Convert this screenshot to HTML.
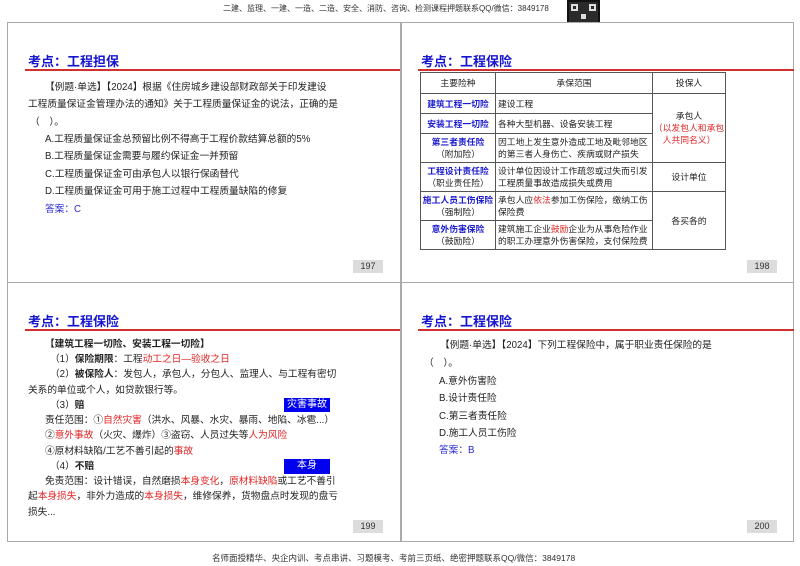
<!DOCTYPE html>
<html><head><meta charset="utf-8">
<style>
*{margin:0;padding:0;box-sizing:border-box}
body{width:800px;height:566px;background:#fff;position:relative;overflow:hidden;font-family:"Liberation Sans","Noto Sans CJK SC",sans-serif;color:#222}
.a{position:absolute;white-space:nowrap}
.panel{position:absolute;border:1px solid #aaa;background:#fff}
.title{position:absolute;font-size:13px;font-weight:bold;color:#1515d0;white-space:nowrap}
.rl{position:absolute;height:2px;background:#d03030}
.t{position:absolute;font-size:9.7px;white-space:nowrap;line-height:14px}
.pn{position:absolute;width:30px;height:13px;background:#dcdcdc;font-size:9px;text-align:center;line-height:13px;color:#333}
.r{color:#e02525}
.b{color:#2a2ad0}
.box{position:absolute;background:#0000ee;color:#fff;font-size:10px;text-align:center;line-height:14px}
table{position:absolute;border-collapse:collapse;font-size:8.8px;table-layout:fixed}
td{border:1px solid #555;text-align:center;line-height:12px;padding:0;white-space:nowrap;overflow:hidden}
td.l{text-align:left;padding-left:2px}
td .k{color:#1a1ad0;font-weight:bold}
</style></head><body>
<div class="a" style="left:223px;top:3px;font-size:8px;color:#333">二建、监理、一建、一造、二造、安全、消防、咨询、检测课程押题联系QQ/微信：3849178</div>
<div class="a" style="left:567px;top:0;width:33px;height:33px;background:#2a2a2a;border:2px solid #111">
<div style="position:absolute;left:2px;top:2px;width:7px;height:7px;border:2px solid #ddd"></div>
<div style="position:absolute;right:2px;top:2px;width:7px;height:7px;border:2px solid #ddd"></div>
<div style="position:absolute;left:2px;bottom:2px;width:7px;height:7px;border:2px solid #ddd"></div>
<div style="position:absolute;left:12px;top:12px;width:5px;height:5px;background:#ddd"></div>
</div>

<div class="panel" style="left:7px;top:22px;width:394px;height:261px"></div>
<div class="panel" style="left:401px;top:22px;width:393px;height:261px"></div>
<div class="panel" style="left:7px;top:282px;width:394px;height:260px"></div>
<div class="panel" style="left:401px;top:282px;width:393px;height:260px"></div>

<!-- 197 -->
<div class="title" style="left:28px;top:51px">考点：工程担保</div>
<div class="rl" style="left:25px;top:69px;width:375px"></div>
<div class="t" style="left:45px;top:81px">【例题·单选】【2024】根据《住房城乡建设部财政部关于印发建设</div>
<div class="t" style="left:28px;top:98px">工程质量保证金管理办法的通知》关于工程质量保证金的说法，正确的是</div>
<div class="t" style="left:30px;top:116px">（　）。</div>
<div class="t" style="left:45px;top:133px">A.工程质量保证金总预留比例不得高于工程价款结算总额的5%</div>
<div class="t" style="left:45px;top:150px">B.工程质量保证金需要与履约保证金一并预留</div>
<div class="t" style="left:45px;top:168px">C.工程质量保证金可由承包人以银行保函替代</div>
<div class="t" style="left:45px;top:185px">D.工程质量保证金可用于施工过程中工程质量缺陷的修复</div>
<div class="t b" style="left:45px;top:203px">答案：C</div>
<div class="pn" style="left:353px;top:260px">197</div>

<!-- 198 -->
<div class="title" style="left:421px;top:51px">考点：工程保险</div>
<div class="rl" style="left:418px;top:69px;width:376px"></div>
<table style="left:420px;top:72px;width:305px">
<colgroup><col style="width:75px"><col style="width:157px"><col style="width:73px"></colgroup>
<tr style="height:21px"><td>主要险种</td><td>承保范围</td><td>投保人</td></tr>
<tr style="height:20px"><td><span class="k">建筑工程一切险</span></td><td class="l">建设工程</td><td rowspan="3">承包人<br><span class="r">（以发包人和承包<br>人共同名义）</span></td></tr>
<tr style="height:20px"><td><span class="k">安装工程一切险</span></td><td class="l">各种大型机器、设备安装工程</td></tr>
<tr style="height:29px"><td><span class="k">第三者责任险</span><br>（附加险）</td><td class="l">因工地上发生意外造成工地及毗邻地区<br>的第三者人身伤亡、疾病或财产损失</td></tr>
<tr style="height:29px"><td><span class="k">工程设计责任险</span><br>（职业责任险）</td><td class="l">设计单位因设计工作疏忽或过失而引发<br>工程质量事故造成损失或费用</td><td>设计单位</td></tr>
<tr style="height:29px"><td><span class="k">施工人员工伤保险</span><br>（强制险）</td><td class="l">承包人应<span class="r">依法</span>参加工伤保险，缴纳工伤<br>保险费</td><td rowspan="2">各买各的</td></tr>
<tr style="height:29px"><td><span class="k">意外伤害保险</span><br>（鼓励险）</td><td class="l">建筑施工企业<span class="r">鼓励</span>企业为从事危险作业<br>的职工办理意外伤害保险，支付保险费</td></tr>
</table>
<div class="pn" style="left:747px;top:260px">198</div>

<!-- 199 -->
<div class="title" style="left:28px;top:311px">考点：工程保险</div>
<div class="rl" style="left:25px;top:329px;width:375px"></div>
<div class="t" style="left:45px;top:338px;font-weight:bold">【建筑工程一切险、安装工程一切险】</div>
<div class="t" style="left:50px;top:353px">（1）<b>保险期限</b>：工程<span class="r">动工之日—验收之日</span></div>
<div class="t" style="left:50px;top:368px">（2）<b>被保险人</b>：发包人，承包人，分包人、监理人、与工程有密切</div>
<div class="t" style="left:28px;top:384px">关系的单位或个人，如贷款银行等。</div>
<div class="t" style="left:50px;top:399px">（3）<b>赔</b></div>
<div class="box" style="left:284px;top:398px;width:46px;height:14px">灾害事故</div>
<div class="t" style="left:45px;top:414px">责任范围：①<span class="r">自然灾害</span>（洪水、风暴、水灾、暴雨、地陷、冰雹...）</div>
<div class="t" style="left:45px;top:429px">②<span class="r">意外事故</span>（火灾、爆炸）③盗窃、人员过失等<span class="r">人为风险</span></div>
<div class="t" style="left:45px;top:445px">④原材料缺陷/工艺不善引起的<span class="r">事故</span></div>
<div class="t" style="left:50px;top:460px">（4）<b>不赔</b></div>
<div class="box" style="left:284px;top:459px;width:46px;height:15px">本身</div>
<div class="t" style="left:45px;top:475px">免责范围：设计错误，自然磨损<span class="r">本身变化</span>，<span class="r">原材料缺陷</span>或工艺不善引</div>
<div class="t" style="left:28px;top:490px">起<span class="r">本身损失</span>，非外力造成的<span class="r">本身损失</span>，维修保养，货物盘点时发现的盘亏</div>
<div class="t" style="left:28px;top:506px">损失...</div>
<div class="pn" style="left:353px;top:520px">199</div>

<!-- 200 -->
<div class="title" style="left:421px;top:311px">考点：工程保险</div>
<div class="rl" style="left:418px;top:329px;width:376px"></div>
<div class="t" style="left:440px;top:339px">【例题·单选】【2024】下列工程保险中，属于职业责任保险的是</div>
<div class="t" style="left:424px;top:357px">（　）。</div>
<div class="t" style="left:439px;top:375px">A.意外伤害险</div>
<div class="t" style="left:439px;top:392px">B.设计责任险</div>
<div class="t" style="left:439px;top:410px">C.第三者责任险</div>
<div class="t" style="left:439px;top:427px">D.施工人员工伤险</div>
<div class="t b" style="left:439px;top:444px">答案：B</div>
<div class="pn" style="left:747px;top:520px">200</div>

<div class="a" style="left:212px;top:552px;font-size:8.5px;color:#333">名师面授精华、央企内训、考点串讲、习题模考、考前三页纸、绝密押题联系QQ/微信：3849178</div>
</body></html>
